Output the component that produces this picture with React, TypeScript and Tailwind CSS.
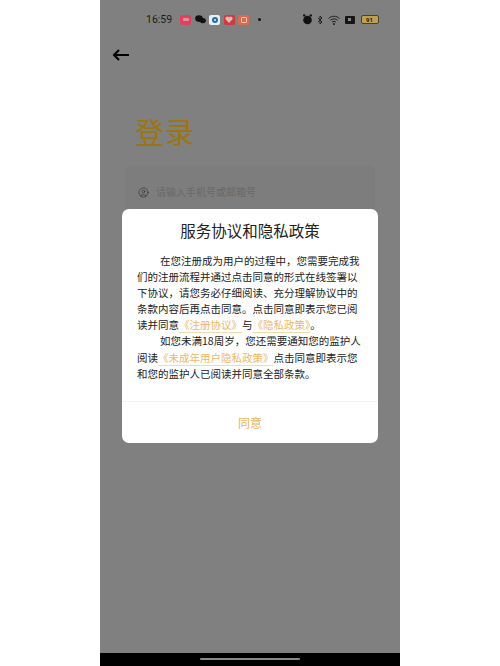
import { CircleUser } from 'lucide-react';

const cjk = { fontFamily: '"Noto Sans CJK SC", sans-serif' };

function Link({ children }: { children: string }) {
  return <span className="text-[#eeb766] underline decoration-[#f3d9ae] underline-offset-[3px]">{children}</span>;
}

function AppDot({ color, children }: { color: string; children?: React.ReactNode }) {
  return (
    <div className={`flex h-[10px] w-[11px] items-center justify-center rounded-[2px] ${color}`}>
      {children}
    </div>
  );
}

function StatusBar() {
  return (
    <div className="flex h-[38px] items-center pl-[46px] pt-[1px] text-[#161616]">
      <span className="w-[34px] pt-[2px] text-[10.5px] leading-none text-[#1c1c1c]" style={{ fontFamily: '"Roboto", sans-serif' }}>16:59</span>
      <div className="flex items-center gap-[3.5px]">
        <AppDot color="bg-[#d9455f]"><div className="h-[3px] w-[6px] rounded-[1px] bg-[#ee8a98]" /></AppDot>
        <svg width="11" height="9" viewBox="0 0 11 9" className="fill-[#111]">
          <ellipse cx="4" cy="3.6" rx="3.8" ry="3.3" />
          <ellipse cx="7.8" cy="5.6" rx="3.1" ry="2.7" />
        </svg>
        <AppDot color="bg-[#e8eef4]"><div className="h-[6px] w-[6px] rounded-full border-2 border-[#1d6fa8]" /></AppDot>
        <AppDot color="bg-[#c93b45]">
          <svg width="8" height="7" viewBox="0 0 8 7" className="fill-[#f0b4b4]"><path d="M4 7 .5 3.2C-.5 1.5 2.6-.9 4 1.4 5.4-.9 8.500 1.500 7.500 3.200Z" /></svg>
        </AppDot>
        <AppDot color="bg-[#dc6a50]"><div className="h-[6px] w-[6px] rounded-[1px] border border-[#f4c9b0]" /></AppDot>
        <div className="ml-[5px] h-[3px] w-[3px] rounded-full bg-[#111]" />
      </div>
      <div className="ml-[42px] flex items-center gap-[5px]">
        <svg width="9" height="11" viewBox="0 0 9 11" className="fill-[#111]">
          <circle cx="4.500" cy="6" r="4.300" />
          <circle cx="1.200" cy="1.400" r="1.200" />
          <circle cx="7.800" cy="1.400" r="1.200" />
        </svg>
        <svg width="6" height="10" viewBox="0 0 6 10" fill="none" stroke="#222" strokeWidth="1"><path d="M1 2.800 5 7 3 9V1l2 2-4 4.200" /></svg>
        <svg width="12" height="10" viewBox="0 0 12 10" fill="none" stroke="#222" strokeWidth="1">
          <path d="M.5 3.500c3-3 8-3 11 0M2.300 5.400c2-2 5.400-2 7.400 0M4 7.200c1-1 3-1 4 0" />
          <circle cx="6" cy="9" r=".6" fill="#222" />
        </svg>
        <div className="flex h-[8px] w-[10px] items-center justify-center rounded-[1px] bg-[#151515]">
          <div className="h-[3px] w-[3px] bg-[#888]" />
        </div>
        <div className="ml-[1px] flex h-[9px] w-[18px] items-center justify-center rounded-[2px] border border-[#4a412a] bg-[#bda052] text-[6px] font-bold leading-none text-[#1a1a1a]" style={{ fontFamily: '"Roboto", sans-serif' }}>91</div>
      </div>
    </div>
  );
}

export default function App() {
  return (
    <div className="flex h-[666px] w-[500px] justify-center overflow-hidden bg-white" style={cjk}>
      <div className="relative flex w-[300px] flex-col bg-[#808080]">
        <StatusBar />
        <div className="pl-[12px] pt-[11px]">
          <svg width="17" height="12" viewBox="0 0 17 12" fill="none" stroke="#000" strokeWidth="2">
            <path d="M17 6H2M7 1 2 6l5 5" />
          </svg>
        </div>
        <h1 className="ml-[35px] mt-[51px] text-[29px] font-normal leading-[38px] tracking-[1px] text-[#9a7512]">登录</h1>
        <div className="mx-[25px] mt-[16px] h-[90px] rounded-[4px] bg-[#7d7d7d] px-[13px] pt-[19px]">
          <div className="flex items-center gap-[7px]">
            <CircleUser size={11} strokeWidth={1.500} className="text-[#333]" />
            <span className="text-[10px] leading-[14px] text-[#696969]">请输入手机号或邮箱号</span>
          </div>
        </div>
        <div className="flex-1" />
        <div className="flex h-[13px] justify-center bg-black pt-[5px]">
          <div className="h-[2px] w-[100px] rounded-full bg-[#888]" />
        </div>

        <div className="absolute left-[22px] top-[209px] flex h-[234px] w-[256px] flex-col rounded-[7px] bg-white">
          <h2 className="pt-[10px] text-center text-[15.500px] font-normal leading-[22px] text-[#222]">服务协议和隐私政策</h2>
          <div className="mt-[12px] px-[15px] text-[10.500px] leading-[16.100px] whitespace-nowrap text-[#222]">
            <div className="pl-[23px]">在您注册成为用户的过程中，您需要完成我</div>
            <div>们的注册流程并通过点击同意的形式在线签署以</div>
            <div>下协议，请您务必仔细阅读、充分理解协议中的</div>
            <div>条款内容后再点击同意。点击同意即表示您已阅</div>
            <div>读并同意<Link>《注册协议》</Link>与<Link>《隐私政策》</Link>。</div>
            <div className="pl-[23px]">如您未满18周岁，您还需要通知您的监护人</div>
            <div>阅读<Link>《未成年用户隐私政策》</Link>点击同意即表示您</div>
            <div>和您的监护人已阅读并同意全部条款。</div>
          </div>
          <div className="mt-auto flex h-[42px] items-center justify-center border-t border-[#f3f3f3] text-[12px] text-[#e9b25e]">同意</div>
        </div>
      </div>
    </div>
  );
}
